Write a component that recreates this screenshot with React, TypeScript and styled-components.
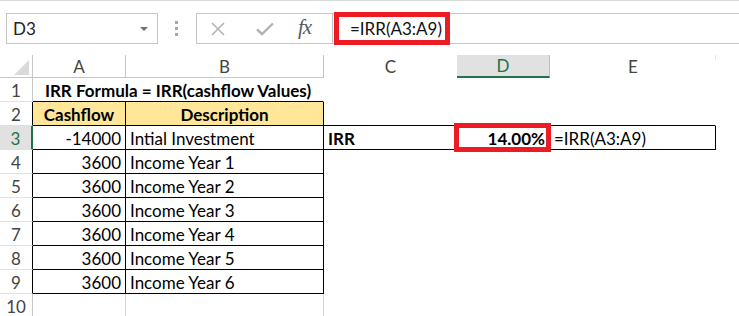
import React from 'react'
import styled, {createGlobalStyle, css} from 'styled-components'

const GlobalStyle = createGlobalStyle`
    html, body {
        margin: 0;
        padding: 0;
        background: #fff;
    }
    body {
        font-family: Lato, 'Liberation Sans', sans-serif;
        color: #000;
    }
`

const GREEN = '#217346'
const GRID = '#d4d4d4'
const HEAD_LINE = '#c6c6c6'

const Sheet = styled.div`
    width: 739px;
    height: 316px;
    overflow: hidden;
    background: #fff;
    border-top: 1px solid #d9d9d9;
    box-sizing: border-box;
`

// ---- formula bar ----
const Toolbar = styled.div`
    display: flex;
    align-items: stretch;
    height: 31px;
    margin-top: 12px;
    padding-left: 6px;
`

const NameBox = styled.div`
    position: relative;
    width: 152px;
    box-sizing: border-box;
    border: 1px solid ${HEAD_LINE};
    display: flex;
    align-items: center;
    padding-left: 6px;
    font-size: 17px;
    color: #222;
`

const Caret = styled.span`
    position: absolute;
    right: 9px;
    top: 13px;
    width: 0;
    height: 0;
    border-left: 4px solid transparent;
    border-right: 4px solid transparent;
    border-top: 4px solid #707070;
`

const Dots = styled.div`
    width: 4px;
    margin: 0 17px 0 17px;
    display: flex;
    flex-direction: column;
    justify-content: center;
    gap: 3px;

    span {
        width: 3px;
        height: 3px;
        background: #a6a6a6;
    }
`

const FxButtons = styled.div`
    width: 137px;
    box-sizing: border-box;
    border: 1px solid ${HEAD_LINE};
    display: flex;
    align-items: center;
    padding-left: 13px;
`

const IconSlot = styled.div<{ $w: number }>`
    width: ${(p) => p.$w}px;
    display: flex;
    align-items: center;
`

const Fx = styled.span`
    font-family: 'Liberation Serif', 'DejaVu Serif', serif;
    font-style: italic;
    font-size: 21px;
    color: #5a5a5a;
    letter-spacing: -1px;
    margin-top: -2px;
`

const FormulaInput = styled.div`
    position: relative;
    flex: 1;
    border-top: 1px solid ${HEAD_LINE};
    border-bottom: 1px solid ${HEAD_LINE};
    display: flex;
    align-items: center;
    padding-left: 17px;
    font-size: 17px;
    color: #111;
`

const RedBox = styled.div<{ $l: number; $t: number; $r: number; $b: number }>`
    position: absolute;
    left: ${(p) => p.$l}px;
    top: ${(p) => p.$t}px;
    right: ${(p) => p.$r}px;
    bottom: ${(p) => p.$b}px;
    border: 5px solid #ed1c24;
    pointer-events: none;
`

const FormulaRedBox = styled(RedBox)`
    right: auto;
    width: 116px;
    box-sizing: border-box;
`

// ---- grid ----
const Grid = styled.div`
    margin-top: 11px;
    display: grid;
    grid-template-columns: 33px 93px 198px 133px 93px 166px 23px;
    grid-template-rows: 23px;
    grid-auto-rows: 24px;
`

const Corner = styled.div`
    position: relative;
    border-right: 1px solid ${HEAD_LINE};
    border-bottom: 1px solid ${HEAD_LINE};
    box-sizing: border-box;

    svg {
        position: absolute;
        right: 3px;
        bottom: 2px;
    }
`

const ColHead = styled.div<{ $sel?: boolean; $line?: boolean; $tick?: boolean }>`
    position: relative;
    box-sizing: border-box;
    display: flex;
    align-items: center;
    justify-content: center;
    font-size: 17px;
    color: #444;
    ${(p) =>
        p.$line &&
        css`
            border-right: 1px solid ${HEAD_LINE};
            border-bottom: 1px solid ${HEAD_LINE};
        `}
    ${(p) =>
        p.$sel &&
        css`
            background: #e1e1e1;
            color: ${GREEN};
            border-right: 1px solid #bdbdbd;
            border-bottom: 2px solid ${GREEN};
        `}
    ${(p) =>
        p.$tick &&
        css`
            &::after {
                content: '';
                position: absolute;
                right: 0;
                top: 0;
                width: 1px;
                height: 5px;
                background: #e6e6e6;
            }
        `}
`

const RowHead = styled.div<{ $edge: string; $sel?: boolean }>`
    box-sizing: border-box;
    display: flex;
    align-items: center;
    justify-content: center;
    padding-top: 1px;
    font-size: 17px;
    color: #444;
    border-bottom: 1px solid #e1e1e1;
    border-right: 1px solid ${(p) => p.$edge};
    ${(p) =>
        p.$sel &&
        css`
            background: #e1e1e1;
            color: ${GREEN};
            border-right: 2px solid ${GREEN};
        `}
`

const Cell = styled.div<{
    $align?: 'left' | 'right' | 'center'
    $bold?: boolean
    $fill?: string
    $right?: string
    $bottom?: string
    $span?: number
}>`
    position: relative;
    box-sizing: border-box;
    display: flex;
    align-items: center;
    padding: 1px 4px 0 4px;
    font-size: 17px;
    white-space: nowrap;
    justify-content: ${(p) =>
        p.$align === 'right' ? 'flex-end' : p.$align === 'center' ? 'center' : 'flex-start'};
    font-weight: ${(p) => (p.$bold ? 700 : 400)};
    background: ${(p) => p.$fill || 'transparent'};
    border-right: 1px solid ${(p) => p.$right || 'transparent'};
    border-bottom: 1px solid ${(p) => p.$bottom || 'transparent'};
    ${(p) => p.$span && css`grid-column: span ${p.$span};`}
`

const YELLOW = '#ffe699'
const B = '#000'

const rows = [
    ['-14000', 'Intial Investment'],
    ['3600', 'Income Year 1'],
    ['3600', 'Income Year 2'],
    ['3600', 'Income Year 3'],
    ['3600', 'Income Year 4'],
    ['3600', 'Income Year 5'],
    ['3600', 'Income Year 6'],
]

const CloseIcon = () => (
    <svg width="16" height="16" viewBox="0 0 16 16">
        <path d="M2 2 L14 14 M14 2 L2 14" stroke="#b3b3b3" strokeWidth="1.6" fill="none"/>
    </svg>
)

const CheckIcon = () => (
    <svg width="18" height="14" viewBox="0 0 18 14">
        <path d="M1 7.5 L6 12 L17 1.5" stroke="#b3b3b3" strokeWidth="2.4" fill="none"/>
    </svg>
)

export default function App() {
    return (
        <Sheet>
            <GlobalStyle/>
            <Toolbar>
                <NameBox>
                    D3
                    <Caret/>
                </NameBox>
                <Dots>
                    <span/>
                    <span/>
                    <span/>
                </Dots>
                <FxButtons>
                    <IconSlot $w={46}><CloseIcon/></IconSlot>
                    <IconSlot $w={42}><CheckIcon/></IconSlot>
                    <IconSlot $w={30}><Fx>fx</Fx></IconSlot>
                </FxButtons>
                <FormulaInput>
                    =IRR(A3:A9)
                    <FormulaRedBox $l={1} $t={-2} $r={0} $b={-2}/>
                </FormulaInput>
            </Toolbar>

            <Grid>
                <Corner>
                    <svg width="15" height="15" viewBox="0 0 15 15">
                        <polygon points="15,0 15,15 0,15" fill="#dadada"/>
                    </svg>
                </Corner>
                <ColHead $line>A</ColHead>
                <ColHead $line>B</ColHead>
                <ColHead>C</ColHead>
                <ColHead $sel>D</ColHead>
                <ColHead $tick>E</ColHead>
                <ColHead/>

                {/* row 1 */}
                <RowHead $edge={HEAD_LINE}>1</RowHead>
                <Cell $span={2} $align="center" $bold $bottom={B}>
                    IRR Formula = IRR(cashflow Values)
                </Cell>
                <Cell/>
                <Cell/>
                <Cell/>
                <Cell/>

                {/* row 2 */}
                <RowHead $edge={B}>2</RowHead>
                <Cell $align="center" $bold $fill={YELLOW} $right={B} $bottom={B}>Cashflow</Cell>
                <Cell $align="center" $bold $fill={YELLOW} $right={B} $bottom={B}>Description</Cell>
                <Cell $bottom={B}/>
                <Cell $bottom={B}/>
                <Cell $bottom={B}/>
                <Cell/>

                {rows.map(([amount, label], i) => {
                    const n = i + 3
                    return (
                        <React.Fragment key={n}>
                            <RowHead $edge={B} $sel={n === 3}>{n}</RowHead>
                            <Cell $align="right" $right={B} $bottom={B}>{amount}</Cell>
                            <Cell $right={B} $bottom={B}>{label}</Cell>
                            {n === 3 ? (
                                <>
                                    <Cell $bold $bottom={B}>IRR</Cell>
                                    <Cell $align="right" $bold $bottom={B}>
                                        14.00%
                                        <RedBox $l={-3} $t={-3} $r={-2} $b={-3}/>
                                    </Cell>
                                    <Cell $right={B} $bottom={B}>=IRR(A3:A9)</Cell>
                                </>
                            ) : (
                                <>
                                    <Cell/>
                                    <Cell/>
                                    <Cell/>
                                </>
                            )}
                            <Cell/>
                        </React.Fragment>
                    )
                })}

                {/* row 10 */}
                <RowHead $edge={HEAD_LINE}>10</RowHead>
                <Cell $right={GRID}/>
                <Cell $right={GRID}/>
                <Cell/>
                <Cell/>
                <Cell/>
                <Cell/>
            </Grid>
        </Sheet>
    )
}
